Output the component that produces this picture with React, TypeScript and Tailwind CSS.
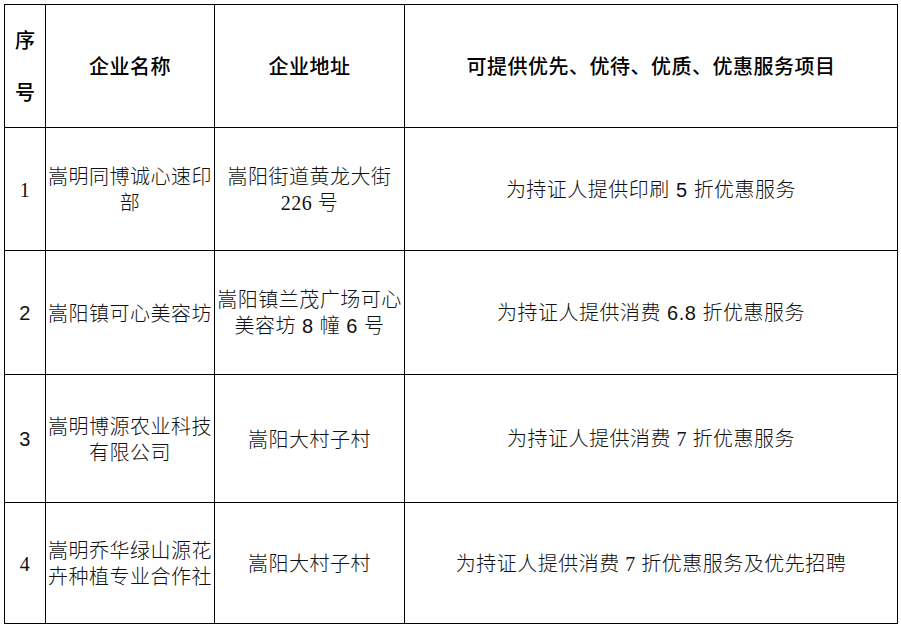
const sans = "font-['Noto_Sans_CJK_SC',sans-serif]"
const serifNum = "font-['Liberation_Serif','Noto_Sans_CJK_SC',serif]"
const sansNum = "font-['Liberation_Sans','Noto_Sans_CJK_SC',sans-serif]"

type Row = {
  no: React.ReactNode
  name: React.ReactNode
  addr: React.ReactNode
  service: React.ReactNode
  h: string
}

const rows: Row[] = [
  {
    no: <span className={serifNum}>1</span>,
    name: "嵩明同博诚心速印部",
    addr: (
      <>
        嵩阳街道黄龙大街<span className={serifNum}>226 </span>号
      </>
    ),
    service: (
      <>
        为持证人提供印刷<span className={sansNum}> 5 </span>折优惠服务
      </>
    ),
    h: "h-[123px]",
  },
  {
    no: <span className={sansNum}>2</span>,
    name: "嵩阳镇可心美容坊",
    addr: (
      <>
        嵩阳镇兰茂广场可心美容坊<span className={sansNum}> 8 </span>幢<span className={sansNum}> 6 </span>号
      </>
    ),
    service: (
      <>
        为持证人提供消费<span className={sansNum}> 6.8 </span>折优惠服务
      </>
    ),
    h: "h-[124px]",
  },
  {
    no: <span className={sansNum}>3</span>,
    name: "嵩明博源农业科技有限公司",
    addr: "嵩阳大村子村",
    service: (
      <>
        为持证人提供消费<span className={serifNum}> 7 </span>折优惠服务
      </>
    ),
    h: "h-[128px]",
  },
  {
    no: <span className={serifNum}>4</span>,
    name: "嵩明乔华绿山源花卉种植专业合作社",
    addr: "嵩阳大村子村",
    service: (
      <>
        为持证人提供消费<span className={serifNum}> 7 </span>折优惠服务及优先招聘
      </>
    ),
    h: "h-[121px]",
  },
]

export default function App() {
  return (
    <div className="w-[901px] h-[628px] bg-white pl-[4px] pt-[4px]">
      <table className={`w-[893px] table-fixed border-collapse text-[20px] text-black ${sans}`}>
        <colgroup>
          <col className="w-[41px]" />
          <col className="w-[169px]" />
          <col className="w-[190px]" />
          <col className="w-[493px]" />
        </colgroup>
        <thead>
          <tr className="h-[123px]">
            <th className="border border-black px-[6px] font-medium leading-[52px]">序号</th>
            <th className="border border-black px-1 font-medium tracking-[0.5px]">企业名称</th>
            <th className="border border-black px-1 font-medium tracking-[0.5px]">企业地址</th>
            <th className="border border-black px-1 font-medium tracking-[0.5px]">
              可提供优先、优待、优质、优惠服务项目
            </th>
          </tr>
        </thead>
        <tbody className="font-light leading-[26px] tracking-[0.5px] text-[#111]">
          {rows.map((r, i) => (
            <tr key={i} className={r.h}>
              <td className="border border-black px-1 text-center">{r.no}</td>
              <td className="border border-black px-0 text-center">{r.name}</td>
              <td className="border border-black px-0 text-center">{r.addr}</td>
              <td className="border border-black px-1 text-center">{r.service}</td>
            </tr>
          ))}
        </tbody>
      </table>
    </div>
  )
}
